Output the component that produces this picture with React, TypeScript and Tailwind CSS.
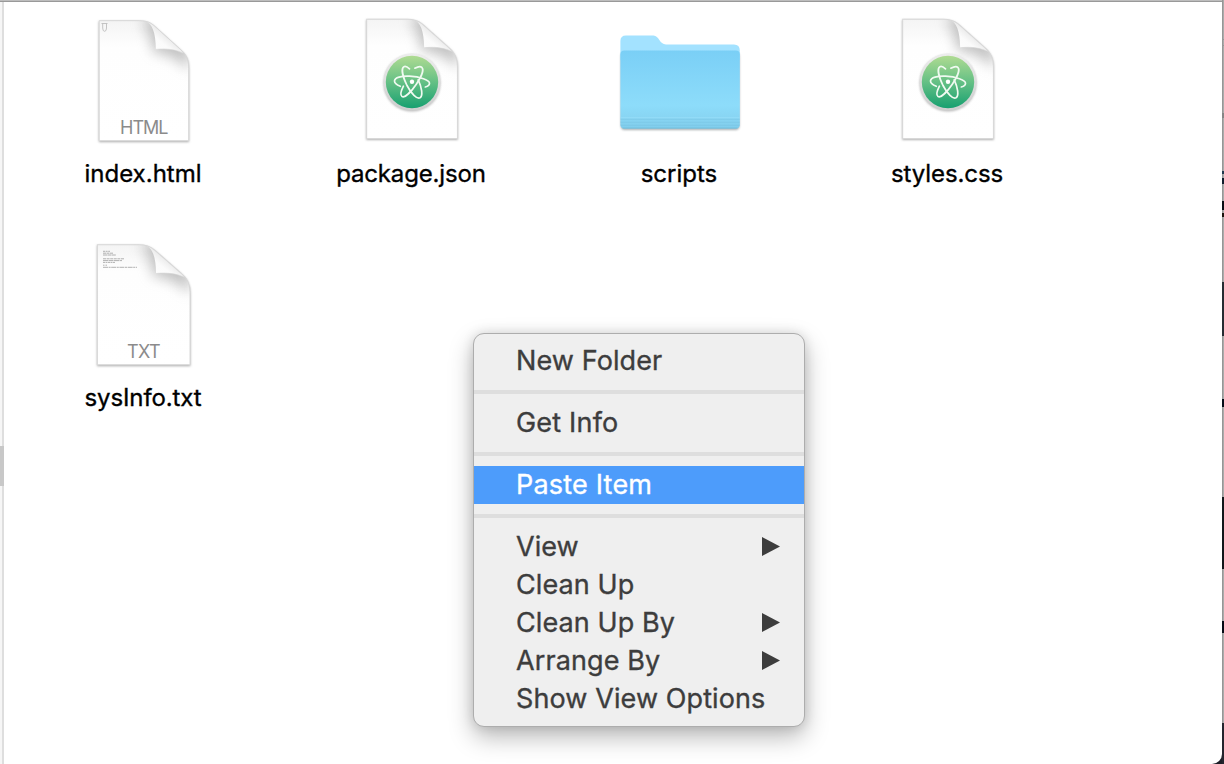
import React from "react";

type Kind = "html" | "txt" | "atom" | "folder";

const FONT = "font-['Inter','Liberation_Sans',sans-serif]";

function Page({ id, transform }: { id: string; transform: string }) {
  const outline =
    "M20 10.5H60C67 10.5 71 12 75 15.5L101 39C107 44 109.5 49 109.5 58V130.5H20Z";
  return (
    <g transform={transform}>
      <defs>
        <linearGradient id={`${id}-body`} x1="0" y1="0" x2="0" y2="1">
          <stop offset="0" stopColor="#f4f4f4" />
          <stop offset="0.22" stopColor="#fefefe" />
          <stop offset="1" stopColor="#ffffff" />
        </linearGradient>
        <linearGradient id={`${id}-curl`} x1="0" y1="1" x2="0.55" y2="0.45">
          <stop offset="0" stopColor="#ffffff" />
          <stop offset="0.7" stopColor="#fbfbfb" />
          <stop offset="1" stopColor="#ebebeb" />
        </linearGradient>
        <clipPath id={`${id}-clip`}>
          <path d={outline} />
        </clipPath>
        <filter id={`${id}-soft`} x="-50%" y="-50%" width="200%" height="200%">
          <feGaussianBlur stdDeviation="6.5" />
        </filter>
        <filter id={`${id}-drop`} x="-20%" y="-20%" width="140%" height="140%">
          <feGaussianBlur stdDeviation="1" />
        </filter>
      </defs>
      <path d={outline} transform="translate(0 1)" fill="#a0a0a0" stroke="#bcbcbc" filter={`url(#${id}-drop)`} />
      <path d={outline} fill={`url(#${id}-body)`} />
      <g clipPath={`url(#${id}-clip)`}>
        <path
          d="M62 12Q72 20 74 42Q94 43 110 60V34L80 4Z"
          fill="#8f8f8f"
          opacity="0.55"
          filter={`url(#${id}-soft)`}
        />
      </g>
      <path
        d="M66 11C73 13 76.5 22 76.7 39.2C88 38 97 39.5 104 43L101 39L75 15.5C72 13 70 11.5 66 11Z"
        fill={`url(#${id}-curl)`}
      />
      <path d="M76.7 39.2C88 38 97 39.5 104 43" fill="none" stroke="#d6d6d6" strokeWidth="0.6" />
      <path d={outline} fill="none" stroke="#d8d8d8" strokeWidth="1" />
    </g>
  );
}

function AtomBadge({ id }: { id: string }) {
  return (
    <g>
      <defs>
        <linearGradient id={`${id}-green`} x1="0" y1="0" x2="0" y2="1">
          <stop offset="0" stopColor="#afdb92" />
          <stop offset="0.5" stopColor="#65c085" />
          <stop offset="1" stopColor="#17a070" />
        </linearGradient>
        <linearGradient id={`${id}-ring`} x1="0" y1="0" x2="0" y2="1">
          <stop offset="0" stopColor="#ededed" />
          <stop offset="1" stopColor="#cecece" />
        </linearGradient>
        <filter id={`${id}-shadow`} x="-20%" y="-20%" width="140%" height="140%">
          <feGaussianBlur stdDeviation="0.8" />
        </filter>
      </defs>
      <circle cx="65" cy="73" r="28.5" fill="#a0a0a0" opacity="0.7" filter={`url(#${id}-shadow)`} />
      <circle cx="65" cy="72" r="28.5" fill={`url(#${id}-ring)`} />
      <circle cx="65" cy="72" r="26.2" fill={`url(#${id}-green)`} />
      <g fill="none" stroke="#f0faf1" strokeWidth="1.7" strokeLinecap="round">
        <path d="M53.3 76.3C49.5 74.8 47.5 72.8 47.5 71C47.6 67.5 54.5 65.8 62.5 66.2C73 66.7 82.5 70 82.5 73.2C82.5 75 80.8 76.3 78.3 77" />
        <path d="M67.8 58.2C71 56.5 73.5 56.1 74.8 57.3C77.3 59.6 74.2 67 69.3 74.2C63.8 82.3 57.6 88.2 54.9 86.4C53.1 85.1 54.1 80.8 56.4 76.2" />
        <path d="M62.5 58.9C60.2 56.7 58 55.9 56.7 56.9C54 59 56 67.3 60 75.5C64.3 83.8 70 89.4 73 87.8C76.2 86 74.8 77.2 71.2 69.8" />
      </g>
      <circle cx="65" cy="71.8" r="2.2" fill="#ffffff" />
    </g>
  );
}

function FolderArt() {
  return (
    <g>
      <defs>
        <linearGradient id="folder-front" x1="0" y1="0" x2="0" y2="1">
          <stop offset="0" stopColor="#7acff6" />
          <stop offset="0.7" stopColor="#8ddcfa" />
          <stop offset="0.86" stopColor="#88d5f3" />
          <stop offset="1" stopColor="#80cdec" />
        </linearGradient>
        <filter id="folder-shadow" x="-10%" y="-10%" width="120%" height="130%">
          <feGaussianBlur stdDeviation="1.1" />
        </filter>
      </defs>
      <rect x="5.8" y="42" width="118.6" height="78" rx="4" fill="#858d91" opacity="0.7" filter="url(#folder-shadow)" />
      <path
        d="M5.4 47V31Q5.4 25.5 11 25.5H38.5C44 25.5 44.5 34.5 51 34.5H119Q124.8 34.5 124.8 40.5V50H5.4Z"
        fill="#a3e2ff"
      />
      <path
        d="M5.4 44.5Q5.4 40.5 9.4 40.5H120.8Q124.8 40.5 124.8 44.5V114.5Q124.8 118.5 120.8 118.5H9.4Q5.4 118.5 5.4 114.5Z"
        fill="url(#folder-front)"
      />
      <g stroke="#6fb9d8" strokeWidth="0.7" opacity="0.5">
        <path d="M5.4 109.2H124.8M5.4 112.2H124.8M5.4 115.2H124.8" />
      </g>
      <path d="M5.4 107.8H124.8" stroke="#9be0fa" strokeWidth="0.8" />
      <path d="M7.5 118H122.5" stroke="#70bddd" strokeWidth="0.9" />
    </g>
  );
}

function FileArt({ kind, id }: { kind: Kind; id: string }) {
  return (
    <svg className="block h-[140px] w-[128px]" viewBox="0 0 128 140">
      {kind === "folder" && <FolderArt />}
      {kind === "html" && (
        <>
          <Page id={id} transform="translate(0.2 0.2)" />
          <path
            d="M22.5 13.5H28.5M23.7 13.5V18Q23.7 21.3 25.6 21.3Q27.5 21.3 27.5 18V13.5"
            fill="none"
            stroke="#bdbdbd"
            strokeWidth="0.9"
          />
          <text x="65.3" y="123.6" textAnchor="middle" textLength="48.5" className={`${FONT} fill-[#8b8b8b] text-[18px]`}>
            HTML
          </text>
        </>
      )}
      {kind === "txt" && (
        <>
          <Page id={id} transform="translate(-2.3 0.3) scale(1.035 1)" />
          <g stroke="#8d8d8d" strokeWidth="0.9" opacity="0.75">
            <path d="M24 17.3H31" strokeDasharray="2 .6" />
            <path d="M24 19.2H34" strokeDasharray="3 .5" />
            <path d="M24 21H37" strokeDasharray="4 .4" />
            <path d="M24 24.8H45" strokeDasharray="3 .6" />
            <path d="M24 26.6H43" strokeDasharray="5 .5" />
            <path d="M24 28.4H36" strokeDasharray="2 .5" />
            <path d="M24 31.2H28" strokeDasharray="1 .5" />
            <path d="M24 33.3H58" strokeDasharray="5 .6 2 .6" />
          </g>
          <text x="64.8" y="123.6" textAnchor="middle" textLength="33.5" className={`${FONT} fill-[#8b8b8b] text-[18px]`}>
            TXT
          </text>
        </>
      )}
      {kind === "atom" && (
        <>
          <Page id={id} transform="translate(-0.6 -1.2) scale(1.014 0.993)" />
          <AtomBadge id={id} />
        </>
      )}
    </svg>
  );
}

const files: { name: string; kind: Kind; tracking: string }[] = [
  { name: "index.html", kind: "html", tracking: "tracking-[0px]" },
  { name: "package.json", kind: "atom", tracking: "tracking-[-0.15px]" },
  { name: "scripts", kind: "folder", tracking: "tracking-[0px]" },
  { name: "styles.css", kind: "atom", tracking: "tracking-[-0.1px]" },
  { name: "sysInfo.txt", kind: "txt", tracking: "tracking-[-0.1px]" },
];

type Item = { label: string; submenu?: boolean; active?: boolean; tracking: string };

const groups: Item[][] = [
  [{ label: "New Folder", tracking: "tracking-[0.1px]" }],
  [{ label: "Get Info", tracking: "tracking-[0.2px]" }],
  [{ label: "Paste Item", active: true, tracking: "tracking-[0.2px]" }],
  [
    { label: "View", submenu: true, tracking: "tracking-[0px]" },
    { label: "Clean Up", tracking: "tracking-[0.1px]" },
    { label: "Clean Up By", submenu: true, tracking: "tracking-[0.1px]" },
    { label: "Arrange By", submenu: true, tracking: "tracking-[0.1px]" },
    { label: "Show View Options", tracking: "tracking-[0.1px]" },
  ],
];

function ContextMenu() {
  return (
    <div className="absolute top-[333px] left-[473px] w-[332px] rounded-[11px] border border-[#adadad] bg-[#efefef] py-2 shadow-[0_10px_24px_rgba(0,0,0,0.28),0_0_12px_rgba(0,0,0,0.12)]">
      {groups.map((items, g) => (
        <div key={g}>
          {g > 0 && <div className="my-2.5 h-1 bg-[#dedede]" />}
          {items.map((item) => (
            <div
              key={item.label}
              className={`flex h-[38px] items-center justify-between pr-[24px] pl-[42px] text-[27px] whitespace-nowrap [-webkit-text-stroke:0.35px] ${item.tracking} ${
                item.active ? "bg-[#4d9cfb] text-white" : "text-[#3d3d3d]"
              }`}
            >
              <span>{item.label}</span>
              {item.submenu && (
                <svg className="mb-0.5 h-[19px] w-[18px]" viewBox="0 0 18 19">
                  <path d="M0 0L18 9.5L0 19Z" fill="#3d3d3d" />
                </svg>
              )}
            </div>
          ))}
        </div>
      ))}
    </div>
  );
}

const edge = [
  "h-[39px]",
  "h-px bg-[#979797]",
  "h-[5px]",
  "h-px bg-[#979797]",
  "h-[67px]",
  "h-[5px] bg-[#858585]",
  "h-[53px]",
  "h-[3px] bg-[#20394f]",
  "h-[4px]",
  "h-[6px] bg-[#101c2c]",
  "h-[17px]",
  "h-[9px] bg-[#0a0d14]",
  "h-[3px]",
  "h-[4px] bg-[#1b120c]",
  "h-[65px]",
  "h-[54px] bg-[#262c33]",
  "h-[63px]",
  "h-[8px] bg-[#060d18]",
  "h-[90px]",
  "h-[72px] bg-[#12171b]",
  "h-[52px]",
  "h-[12px] bg-[#050a14]",
  "h-[90px]",
  "h-[41px] bg-[#24252e]",
];

export default function App() {
  return (
    <div className={`relative flex h-[764px] w-[1224px] overflow-hidden bg-[#1d1e27] ${FONT}`}>
      <div className="flex min-w-0 flex-1 flex-col overflow-hidden rounded-br-[10px] bg-white">
        <div className="h-px shrink-0 bg-[#bdbdbd]" />
        <div className="h-px shrink-0 bg-[#999999]" />
        <div className="flex min-h-0 flex-1">
          <div className="flex w-1 flex-col border-r-2 border-[#dedede] bg-[#f6f6f6]">
            <div className="mt-[444px] -mr-0.5 h-10 bg-[#c8c8c8]" />
          </div>
          <div className="grid grid-cols-[repeat(4,268px)] content-start pt-2 pl-[5px]">
            {files.map((file) => (
              <div key={file.name} className="flex h-56 flex-col items-center">
                <FileArt kind={file.kind} id={file.name.replace(".", "-")} />
                <div
                  className={`mt-2.5 text-[24px] leading-[28px] text-black [-webkit-text-stroke:0.35px] ${file.tracking}`}
                >
                  {file.name}
                </div>
              </div>
            ))}
          </div>
        </div>
      </div>
      <div className="flex w-0.5 flex-col bg-linear-to-r from-[#8c8c8c] to-[#b5b5b5]">
        {edge.map((segment, i) => (
          <div key={i} className={`shrink-0 ${segment}`} />
        ))}
      </div>
      <ContextMenu />
    </div>
  );
}
